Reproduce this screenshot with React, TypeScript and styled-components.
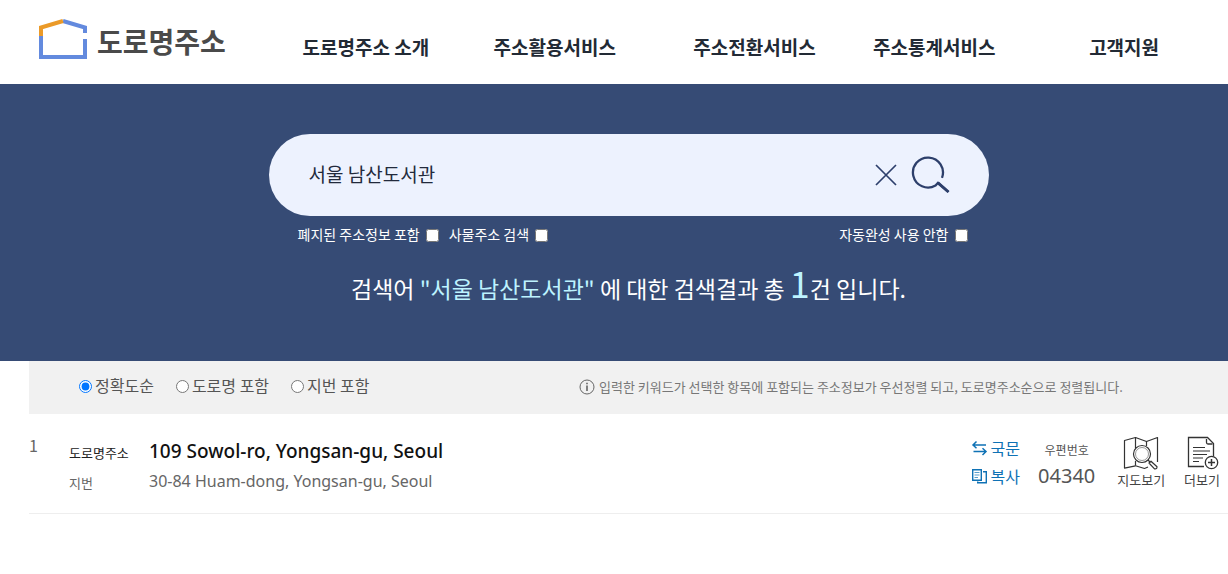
import React, { useState } from "react";
import styled, { createGlobalStyle } from "styled-components";

const GlobalStyle = createGlobalStyle`
  *, *::before, *::after { box-sizing: border-box; }
  body {
    margin: 0;
    background: #fff;
    color: #222;
    font-family: "Noto Sans CJK KR", "Noto Sans", sans-serif;
    font-size: 16px;
    overflow-x: hidden;
  }
  button, input { font: inherit; color: inherit; margin: 0; }
  button { border: 0; padding: 0; background: none; cursor: pointer; }
  a { color: inherit; text-decoration: none; }
`;

const Header = styled.header`
  display: flex;
  align-items: center;
  height: 84px;
  padding-left: 38px;
`;

const Logo = styled.a`
  display: flex;
  flex: 0 0 245px;
  align-items: center;
  gap: 9px;
  padding-bottom: 6px;
  color: #4a4a4a;
  font-size: 28px;
  font-weight: 700;
  line-height: 40px;
  white-space: nowrap;

  span { padding-top: 4px; }
`;

const Nav = styled.nav`
  display: grid;
  flex: 1;
  grid-template-columns: 166fr 212fr 188fr 172fr 208fr;
  padding-top: 10px;
`;

const NavLink = styled.a`
  color: #222a35;
  font-size: 19px;
  font-weight: 700;
  line-height: 28px;
  text-align: center;
  white-space: nowrap;
`;

const Banner = styled.section`
  display: flex;
  flex-direction: column;
  align-items: center;
  padding: 50px 0 48px 29px;
  background: #364b75;
  color: #fff;
`;

const SearchForm = styled.form`
  display: flex;
  align-items: center;
  width: 100%;
  max-width: 720px;
  height: 82px;
  padding: 0 38px 0 40px;
  border-radius: 41px;
  background: #edf2fe;
  color: #2d3f6b;
`;

const SearchInput = styled.input`
  flex: 1;
  min-width: 0;
  height: 48px;
  padding: 0 0 4px;
  border: 0;
  outline: 0;
  background: transparent;
  color: #222a3c;
  font-size: 19px;
`;

const IconButton = styled.button`
  display: flex;
  margin-left: 14px;
`;

const Options = styled.div`
  display: flex;
  gap: 10px;
  width: 100%;
  max-width: 720px;
  padding: 7px 21px 0 29px;
`;

const CheckLabel = styled.label<{ $end?: boolean }>`
  display: flex;
  align-items: center;
  gap: 6px;
  margin-left: ${(p) => (p.$end ? "auto" : "0")};
  font-size: 14px;
  line-height: 22px;

  input { width: 13px; height: 13px; margin-top: 2px; }
`;

const Summary = styled.h1`
  margin: 13px 0 0;
  font-size: 23px;
  font-weight: 400;
  line-height: 50px;
  white-space: nowrap;
`;

const Highlight = styled.span`
  color: #bdf3ff;
`;

const Count = styled.span`
  color: #bdf3ff;
  font-size: 36px;
  line-height: 48px;
`;

const Results = styled.main`
  margin-left: 29px;
`;

const FilterBar = styled.div`
  display: flex;
  align-items: flex-start;
  height: 53px;
  padding: 12px 0 0 50px;
  background: #f1f1f1;
`;

const SortOptions = styled.fieldset`
  display: flex;
  flex: 0 0 500px;
  gap: 22px;
  margin: 0;
  padding: 0;
  border: 0;
`;

const RadioLabel = styled.label`
  display: flex;
  align-items: center;
  gap: 3px;
  color: #555;
  font-size: 16px;
  line-height: 24px;

  input { width: 13px; height: 13px; margin-top: 2px; }
`;

const Notice = styled.p`
  display: flex;
  align-items: center;
  gap: 4px;
  margin: 3px 0 0;
  color: #777;
  font-size: 13px;
  line-height: 22px;
  white-space: nowrap;
`;

const ResultRow = styled.article`
  display: flex;
  align-items: flex-start;
  height: 100px;
  padding: 20px 8px 0 0;
  border-bottom: 1px solid #eee;
`;

const Index = styled.span`
  flex: 0 0 40px;
  color: #666;
  font-size: 16px;
  line-height: 22px;
`;

const AddressList = styled.dl`
  display: grid;
  flex: 1;
  grid-template-columns: 80px 1fr;
  grid-auto-rows: 30px;
  align-items: center;
  margin: 2px 0 0;
  white-space: nowrap;
`;

const Term = styled.dt<{ $main?: boolean }>`
  padding-top: 4px;
  color: ${(p) => (p.$main ? "#222" : "#666")};
  font-size: 13px;
  line-height: 22px;
`;

const Address = styled.dd<{ $main?: boolean }>`
  margin: 0;
  color: ${(p) => (p.$main ? "#111" : "#666")};
  font-family: "Noto Sans", "Noto Sans CJK KR", sans-serif;
  font-size: ${(p) => (p.$main ? "19px" : "16px")};
  font-weight: ${(p) => (p.$main ? 500 : 400)};
  line-height: 28px;
`;

const TextActions = styled.div`
  display: flex;
  flex-direction: column;
  gap: 4px;
  margin-right: 18px;
  padding-top: 2px;
`;

const TextAction = styled.button`
  display: flex;
  align-items: center;
  gap: 3px;
  color: #0f72b5;
  font-size: 16px;
  line-height: 24px;
`;

const Postal = styled.div`
  display: flex;
  flex-direction: column;
  align-items: center;
  margin-right: 22px;
  padding-top: 6px;
  color: #555;
`;

const PostalLabel = styled.span`
  font-size: 12px;
  line-height: 20px;
`;

const PostalCode = styled.strong`
  color: #555;
  font-family: "Noto Sans", sans-serif;
  font-size: 20px;
  font-weight: 400;
  line-height: 32px;
`;

const Tool = styled.button`
  display: flex;
  flex-direction: column;
  align-items: center;
  padding-top: 2px;
  color: #444;
  font-size: 13px;
  line-height: 20px;

  & + & { margin-left: 19px; }
`;

const HouseLogo = () => (
  <svg width="50" height="42" viewBox="0 0 50 42" fill="none" strokeWidth="4" aria-hidden="true">
    <path d="M3 17V39H47V21" stroke="#638ade" />
    <path d="M25 3L47 9.500V15" stroke="#638ade" />
    <path d="M3 18V9.500L25 3" stroke="#eb9a28" />
  </svg>
);

const ClearIcon = () => (
  <svg width="22" height="22" viewBox="0 0 22 22" fill="none" stroke="currentColor" strokeWidth="1.7" aria-hidden="true">
    <path d="M1 1L21 21M21 1L1 21" />
  </svg>
);

const SearchIcon = () => (
  <svg width="40" height="40" viewBox="0 0 40 40" fill="none" stroke="currentColor" strokeWidth="2.3" aria-hidden="true">
    <path d="M31 22.800A15 15 0 1 0 24.500 30.500L27 27.800L37.500 37" />
    <path d="M27 27.800L37.500 37" strokeWidth="2.900" />
  </svg>
);

const InfoIcon = () => (
  <svg width="16" height="16" viewBox="0 0 16 16" fill="none" stroke="#666" aria-hidden="true">
    <circle cx="8" cy="8" r="7" />
    <path d="M8 6.500V12" stroke="#444" strokeWidth="1.300" />
    <path d="M8 3.800V5.200" stroke="#444" strokeWidth="1.300" />
  </svg>
);

const SwapIcon = () => (
  <svg width="17" height="16" viewBox="0 0 17 16" fill="none" stroke="currentColor" strokeWidth="1.500" aria-hidden="true">
    <path d="M5.500 1.500L2 5L5.500 8.200M2 5H15" />
    <path d="M11.500 8.300L15 11.500L11.500 15M15 11.500H2.500" />
  </svg>
);

const CopyIcon = () => (
  <svg width="17" height="16" viewBox="0 0 17 16" fill="none" stroke="currentColor" strokeWidth="1.400" aria-hidden="true">
    <path d="M1.700 1.700H10.300V12.300H1.700Z" />
    <path d="M12 3.700H15.300V14.700H6.700V13.500" />
    <path d="M3.500 4.500H8.500M3.500 7H8.500M3.500 9.500H7" strokeWidth="0.700" />
  </svg>
);

const MapIcon = () => (
  <svg width="36" height="34" viewBox="0 0 36 34" fill="none" stroke="#333" strokeWidth="1.200" strokeLinejoin="round" aria-hidden="true">
    <path d="M12.500 29.800L1.500 32.200V4.500L12.500 1.500L23.500 5.500L34.500 1.500V26" />
    <path d="M12.500 29.800L21.500 32.500L25 31" />
    <path d="M12.500 1.500V12M23.500 5.500V10M12.500 25V29.800" />
    <circle cx="19" cy="18" r="8.500" fill="#fff" />
    <circle cx="19" cy="18" r="6.500" strokeWidth="0.500" />
    <path d="M25 24L27 26" />
    <path d="M26 27L28 25.200L34 30.800Q34 33.500 31.500 32.800Z" fill="#fff" />
  </svg>
);

const MoreIcon = () => (
  <svg width="34" height="34" viewBox="0 0 34 34" fill="none" stroke="#333" strokeWidth="1.300" aria-hidden="true">
    <path d="M19 30.500H3.500V1.500H22.500L28.500 7.500V20" />
    <path d="M21.500 3V6.500Q21.500 8 23 8H27.500" />
    <path d="M8 11.500H20M8 15H25M8 18.500H22M8 22H18M8 25.500H14" strokeWidth="1.200" />
    <circle cx="26.500" cy="26.500" r="6.200" fill="#fff" />
    <path d="M23 26.500H30M26.500 23V30" strokeWidth="1.500" />
  </svg>
);

const menu = ["도로명주소 소개", "주소활용서비스", "주소전환서비스", "주소통계서비스", "고객지원"];
const sorts = ["정확도순", "도로명 포함", "지번 포함"];

export default function App() {
  const [keyword, setKeyword] = useState("서울 남산도서관");
  const [sort, setSort] = useState(sorts[0]);

  return (
    <>
      <GlobalStyle />
      <Header>
        <Logo href="#">
          <HouseLogo />
          <span>도로명주소</span>
        </Logo>
        <Nav>
          {menu.map((item) => (
            <NavLink key={item} href="#">{item}</NavLink>
          ))}
        </Nav>
      </Header>

      <Banner>
        <SearchForm onSubmit={(e) => e.preventDefault()}>
          <SearchInput
            type="text"
            aria-label="검색어"
            value={keyword}
            onChange={(e) => setKeyword(e.target.value)}
          />
          <IconButton type="button" aria-label="지우기" onClick={() => setKeyword("")}>
            <ClearIcon />
          </IconButton>
          <IconButton type="submit" aria-label="검색">
            <SearchIcon />
          </IconButton>
        </SearchForm>
        <Options>
          <CheckLabel>폐지된 주소정보 포함<input type="checkbox" /></CheckLabel>
          <CheckLabel>사물주소 검색<input type="checkbox" /></CheckLabel>
          <CheckLabel $end>자동완성 사용 안함<input type="checkbox" /></CheckLabel>
        </Options>
        <Summary>
          검색어 <Highlight>"서울 남산도서관"</Highlight> 에 대한 검색결과 총 <Count>1</Count>건 입니다.
        </Summary>
      </Banner>

      <Results>
        <FilterBar>
          <SortOptions>
            {sorts.map((item) => (
              <RadioLabel key={item}>
                <input type="radio" name="sort" checked={sort === item} onChange={() => setSort(item)} />
                {item}
              </RadioLabel>
            ))}
          </SortOptions>
          <Notice>
            <InfoIcon />
            입력한 키워드가 선택한 항목에 포함되는 주소정보가 우선정렬 되고, 도로명주소순으로 정렬됩니다.
          </Notice>
        </FilterBar>

        <ResultRow>
          <Index>1</Index>
          <AddressList>
            <Term $main>도로명주소</Term>
            <Address $main>109 Sowol-ro, Yongsan-gu, Seoul</Address>
            <Term>지번</Term>
            <Address>30-84 Huam-dong, Yongsan-gu, Seoul</Address>
          </AddressList>
          <TextActions>
            <TextAction type="button"><SwapIcon />국문</TextAction>
            <TextAction type="button"><CopyIcon />복사</TextAction>
          </TextActions>
          <Postal>
            <PostalLabel>우편번호</PostalLabel>
            <PostalCode>04340</PostalCode>
          </Postal>
          <Tool type="button"><MapIcon />지도보기</Tool>
          <Tool type="button"><MoreIcon />더보기</Tool>
        </ResultRow>
      </Results>
    </>
  );
}
